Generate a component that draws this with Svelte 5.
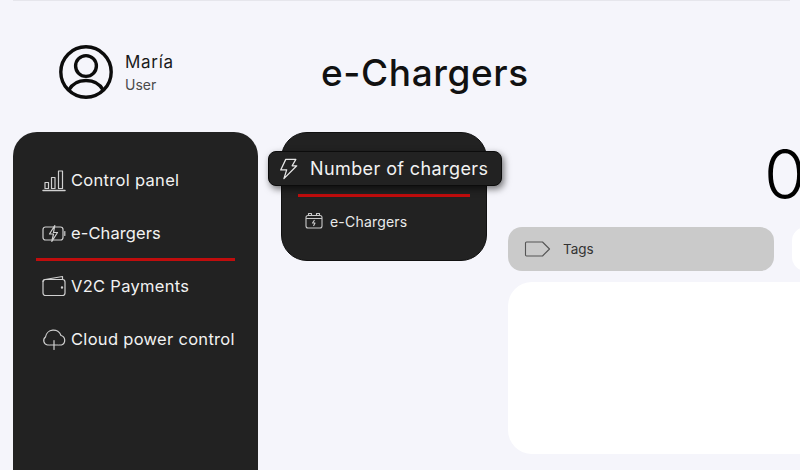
<script>
  const nav = [
    { label: 'Control panel', icon: 'bars' },
    { label: 'e-Chargers', icon: 'battery', active: true },
    { label: 'V2C Payments', icon: 'wallet' },
    { label: 'Cloud power control', icon: 'cloud' }
  ];
</script>

<div class="page">
  <div class="topline"></div>

  <header class="header">
    <div class="user">
      <svg class="avatar" viewBox="0 0 54 54" fill="none" stroke="#0c0c0c" stroke-width="3.4">
        <circle cx="27" cy="27" r="25.200" />
        <circle cx="27" cy="21" r="10.400" />
        <path d="M9.500 45.500C13 39 19.500 35.500 27 35.500S41 39 44.500 45.500" />
      </svg>
      <div class="who">
        <div class="name">María</div>
        <div class="role">User</div>
      </div>
    </div>
    <h1>e-Chargers</h1>
  </header>

  <div class="body">
    <nav class="sidebar">
      {#each nav as item}
        <div class="nav-item" class:active={item.active}>
          <svg class="nav-icon" viewBox="0 0 24 24" fill="none" stroke="#d0d0d0" stroke-width="1.200" stroke-linejoin="round" stroke-linecap="round">
            {#if item.icon === 'bars'}
              <path d="M1 22.500H23" stroke-width="1.500" />
              <path d="M3 20.500V14.500H6.500V20.500ZM9.500 20.500V9.500H13V20.500ZM16.500 20.500V3H20.500V20.500Z" />
            {:else if item.icon === 'battery'}
              <rect x="1" y="6" width="20" height="13" rx="2.500" />
              <path d="M22.800 10.500V14.500" />
              <path d="M12.800 4.500 7.500 13H11.500L9.800 20.500 15.500 11.500H11.500Z" fill="#222" />
            {:else if item.icon === 'wallet'}
              <path d="M1 7.500A2 2 0 0 1 3 5.500L20.500 2.500V5.500" />
              <rect x="1" y="5.500" width="22" height="16" rx="2.500" />
              <circle cx="20" cy="13.500" r=".6" fill="#d0d0d0" />
            {:else}
              <path d="M7 18H5.500A4.500 4.500 0 0 1 3.500 10 8 8 0 0 1 19 8.500 5 5 0 0 1 19.500 18H17" />
              <path d="M12 13.500V22.500M7.800 18H16.200" />
            {/if}
          </svg>
          <span>{item.label}</span>
        </div>
      {/each}
    </nav>

    <div class="middle">
      <section class="card">
        <div class="card-item">
          <svg class="card-icon" viewBox="0 0 18 18" fill="none" stroke="#c9c9c9" stroke-width="1.100" stroke-linejoin="round">
            <rect x="1" y="3.500" width="16" height="12.500" rx="2" />
            <path d="M3.500 3.500V1.500H6.500V3.500M11.500 3.500V1.500H14.500V3.500M1 6.500H17" />
            <path d="M9.500 8 7.500 11H10L8.500 14" />
          </svg>
          <span>e-Chargers</span>
        </div>
      </section>
      <div class="popup">
        <svg class="bolt" viewBox="0 0 20 24" fill="none" stroke="#e6e6e6" stroke-width="1.400" stroke-linejoin="round">
          <path d="M7 1.500H18L14 8.500H19L5 22.500 8 13H1.500Z" />
        </svg>
        <span>Number of chargers</span>
      </div>
    </div>

    <main class="content">
      <div class="count">0</div>
      <div class="tag-row">
        <div class="tag">
          <svg class="tag-icon" viewBox="0 0 26 16" fill="none" stroke="#555" stroke-width="1.100" stroke-linejoin="round">
            <path d="M1 2A1 1 0 0 1 2 1H18L25 8 18 15H2A1 1 0 0 1 1 14Z" />
          </svg>
          <span>Tags</span>
        </div>
        <div class="tag-next"></div>
      </div>
      <div class="panel"></div>
    </main>
  </div>
</div>

<style>
  :global(body) {
    margin: 0;
    background: #f5f5fb;
  }

  .page {
    width: 800px;
    height: 470px;
    overflow: hidden;
    font-family: Inter, "Noto Sans", sans-serif;
    display: flex;
    flex-direction: column;
    padding-left: 13px;
    box-sizing: border-box;
  }

  .topline {
    height: 1px;
    width: 777px;
    background: #e6e6ec;
    flex: none;
  }

  .header {
    height: 131px;
    flex: none;
    display: flex;
    align-items: center;
    padding-top: 11px;
    box-sizing: border-box;
  }

  .user {
    display: flex;
    align-items: center;
    gap: 12px;
    margin-left: 46px;
    width: 262px;
  }

  .avatar {
    width: 54px;
    height: 54px;
  }

  .who {
    margin-top: 2px;
  }

  .name {
    font-size: 17px;
    line-height: 22px;
    color: #1a1a1a;
    letter-spacing: 0.7px;
  }

  .role {
    font-size: 14px;
    line-height: 22px;
    color: #4a4a4a;
    margin-top: 1px;
  }

  h1 {
    margin: 0;
    font-size: 37px;
    font-weight: 500;
    color: #111;
    letter-spacing: 0.6px;
  }

  .body {
    display: flex;
    flex: 1;
    min-height: 0;
  }

  .sidebar {
    width: 245px;
    height: 400px;
    flex: none;
    background: #222;
    border-radius: 24px;
    padding-top: 21px;
    box-sizing: border-box;
  }

  .nav-item {
    position: relative;
    height: 53px;
    margin: 0 23px;
    display: flex;
    align-items: center;
    gap: 5px;
    padding-left: 6px;
    color: #f2f2f2;
    font-size: 16.500px;
    letter-spacing: 0.3px;
    box-sizing: border-box;
    white-space: nowrap;
  }

  .nav-item.active {
    letter-spacing: 0.1px;
  }

  .nav-item.active::after {
    content: "";
    position: absolute;
    left: 0;
    right: 0;
    bottom: -2px;
    height: 3px;
    background: #c00d0d;
  }

  .nav-icon {
    width: 24px;
    height: 24px;
    flex: none;
  }

  .middle {
    position: relative;
    width: 250px;
    flex: none;
  }

  .card {
    margin-left: 23px;
    width: 206px;
    height: 129px;
    box-sizing: border-box;
    background: #222;
    border: 1px solid #111;
    border-radius: 26px;
    padding: 76px 0 0 23px;
    position: relative;
  }

  .card::before {
    content: "";
    position: absolute;
    left: 16px;
    right: 16px;
    top: 61px;
    height: 3px;
    background: #c00d0d;
  }

  .card-item {
    display: flex;
    align-items: center;
    gap: 7px;
    color: #eaeaea;
    font-size: 14px;
    letter-spacing: 0.2px;
    height: 24px;
  }

  .card-icon {
    width: 18px;
    height: 18px;
  }

  .popup {
    position: absolute;
    left: 10px;
    top: 19px;
    width: 234px;
    height: 35px;
    box-sizing: border-box;
    background: #222;
    border: 1px solid #0c0c0c;
    border-radius: 8px;
    box-shadow: 2px 3px 7px rgba(0, 0, 0, 0.55);
    display: flex;
    align-items: center;
    padding-left: 10px;
    gap: 12px;
    color: #f2f2f2;
    font-size: 18px;
    letter-spacing: 0.4px;
    white-space: nowrap;
  }

  .bolt {
    width: 19px;
    height: 22px;
    flex: none;
  }

  .content {
    flex: none;
    width: 400px;
    display: flex;
    flex-direction: column;
  }

  .count {
    height: 95px;
    padding-left: 256px;
    font-size: 68px;
    line-height: 85px;
    font-weight: 300;
    color: #000;
    overflow: hidden;
    box-sizing: border-box;
  }

  .tag-row {
    display: flex;
    gap: 18px;
    height: 44px;
    flex: none;
  }

  .tag {
    width: 266px;
    flex: none;
    background: #cacaca;
    border-radius: 14px;
    display: flex;
    align-items: center;
    padding-left: 16px;
    gap: 12px;
    box-sizing: border-box;
    font-size: 13.500px;
    color: #333;
  }

  .tag-icon {
    width: 27px;
    height: 16px;
  }

  .tag-next {
    width: 100px;
    flex: none;
    background: #fff;
    border-radius: 14px;
  }

  .panel {
    margin-top: 11px;
    height: 172px;
    background: #fff;
    border-radius: 24px;
    flex: none;
    width: 420px;
  }
</style>
